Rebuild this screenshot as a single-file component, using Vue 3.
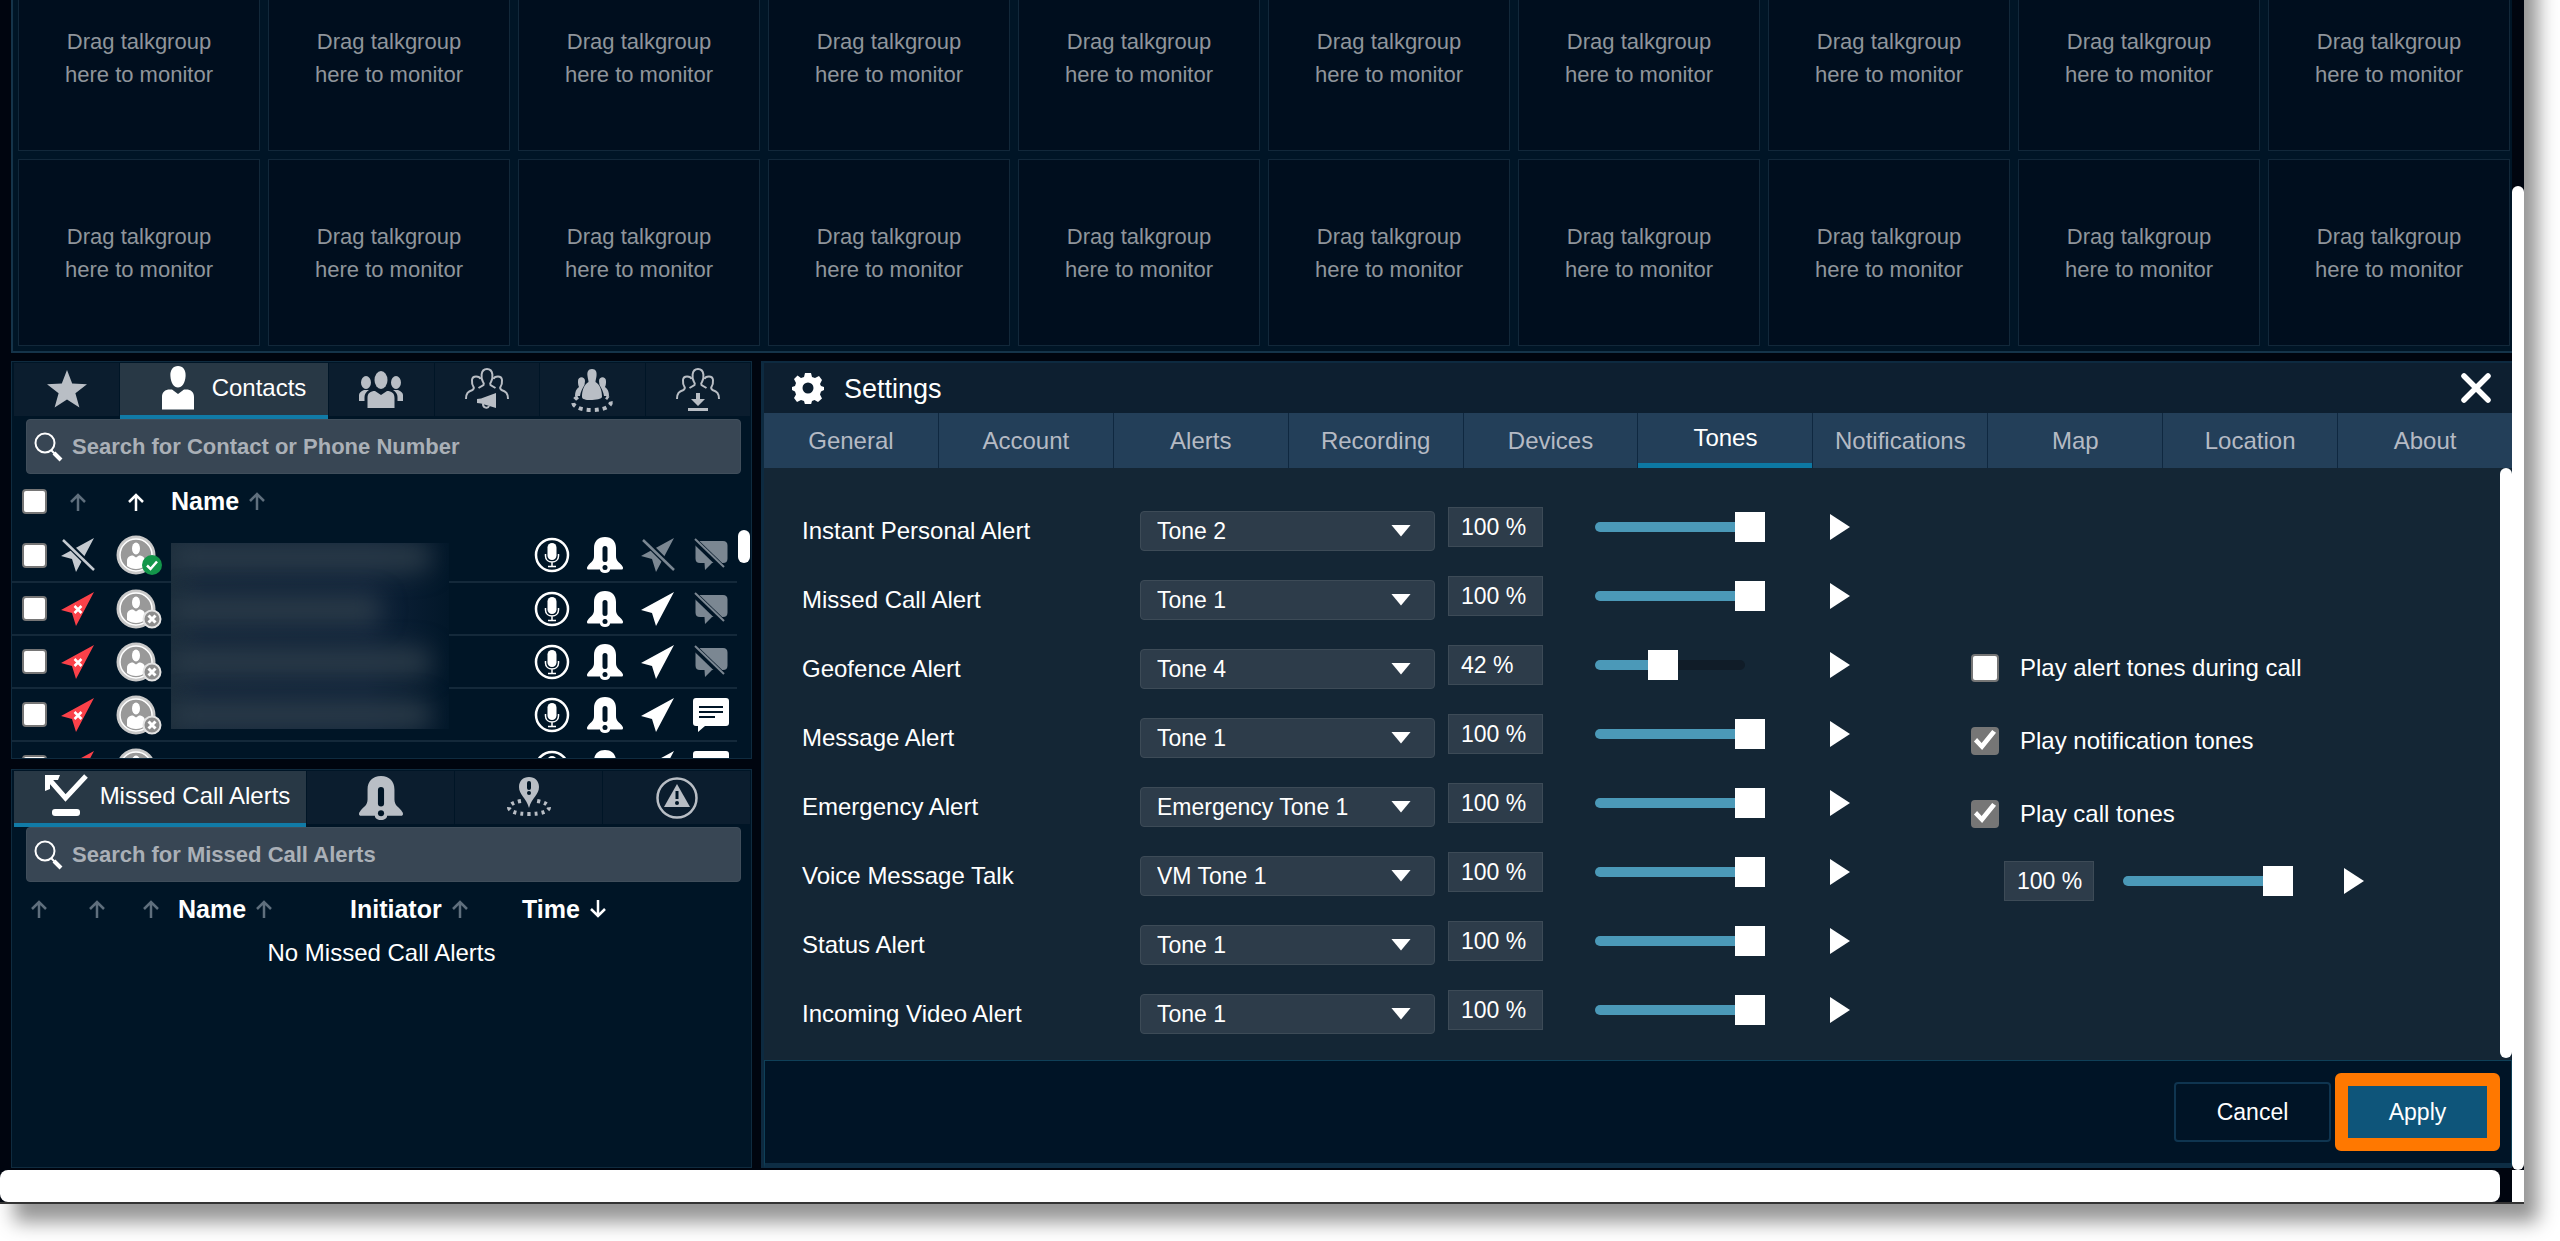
<script setup>
import { reactive } from 'vue'

const monitorSlots = 20

const contactTabs = [
  { id: 'favorites', icon: 'star', label: 'Favorites' },
  { id: 'contacts', icon: 'user', label: 'Contacts', active: true },
  { id: 'groups', icon: 'group', label: 'Groups' },
  { id: 'broadcast', icon: 'group-broadcast', label: 'Broadcast groups' },
  { id: 'area', icon: 'group-area', label: 'Area groups' },
  { id: 'inbound', icon: 'group-download', label: 'Inbound groups' },
]

const contacts = reactive([
  { id: 1, located: 'arrow-off', online: true, locate: false, chat: false, checked: false },
  { id: 2, located: 'arrow-x', online: false, locate: true, chat: false, checked: false },
  { id: 3, located: 'arrow-x', online: false, locate: true, chat: false, checked: false },
  { id: 4, located: 'arrow-x', online: false, locate: true, chat: true, checked: false },
  { id: 5, located: 'arrow-x', online: false, locate: true, chat: true, checked: false },
])

const alertTabs = [
  { id: 'missed', icon: 'missed', label: 'Missed Call Alerts', active: true },
  { id: 'ipa', icon: 'bell', label: 'Personal alerts' },
  { id: 'geo', icon: 'pin-area', label: 'Geofence alerts' },
  { id: 'emergency', icon: 'warning', label: 'Emergency alerts' },
]

const settingsTabs = [
  'General', 'Account', 'Alerts', 'Recording', 'Devices',
  'Tones', 'Notifications', 'Map', 'Location', 'About',
]

const tones = reactive([
  { name: 'Instant Personal Alert', tone: 'Tone 2', volume: 100 },
  { name: 'Missed Call Alert', tone: 'Tone 1', volume: 100 },
  { name: 'Geofence Alert', tone: 'Tone 4', volume: 42 },
  { name: 'Message Alert', tone: 'Tone 1', volume: 100 },
  { name: 'Emergency Alert', tone: 'Emergency Tone 1', volume: 100 },
  { name: 'Voice Message Talk', tone: 'VM Tone 1', volume: 100 },
  { name: 'Status Alert', tone: 'Tone 1', volume: 100 },
  { name: 'Incoming Video Alert', tone: 'Tone 1', volume: 100 },
])

const options = reactive([
  { label: 'Play alert tones during call', on: false },
  { label: 'Play notification tones', on: true },
  { label: 'Play call tones', on: true },
])

const callTones = reactive({ volume: 100 })
</script>

<template>
  <div class="page">
    <svg class="sprite" aria-hidden="true">
      <symbol id="star" viewBox="0 0 44 44">
        <path fill="currentColor" d="M22 2l5.2 13.6 14.8.6-11.6 9 4 14.2L22 31.4 9.600 39.400l4-14.200L2 16.200l14.800-.6z" />
      </symbol>
      <symbol id="user" viewBox="0 0 44 44">
        <path fill="currentColor" d="M22 0c5 0 8 4 7.600 10C29.200 17 26 21.500 22 21.500S14.800 17 14.400 10C14 4 17 0 22 0zM6 43.500V31c0-5 3-7.500 8-7.500h2l6 4.500 6-4.500h2c5 0 8 2.500 8 7.500v12.500z" />
      </symbol>
      <symbol id="group" viewBox="0 0 44 44">
        <g fill="currentColor">
          <ellipse cx="22" cy="12" rx="6.500" ry="9" />
          <path d="M8.500 40V30c0-5 3-7 7.500-7l6 4 6-4c4.500 0 7.500 2 7.500 7v10z" />
          <ellipse cx="7" cy="14.500" rx="5" ry="6.500" />
          <path d="M10 22H5c-3 1-5 3-5 5v6h5.500v-4c0-3 1.500-5 4.500-7z" />
          <ellipse cx="37" cy="14.500" rx="5" ry="6.500" />
          <path d="M34 22h5c3 1 5 3 5 5v6h-5.500v-4c0-3-1.500-5-4.500-7z" />
        </g>
      </symbol>
      <symbol id="group-outline" viewBox="0 0 44 44">
        <g fill="none" stroke="currentColor" stroke-width="2">
          <path d="M18 14c-2-3-3-13 4-13s6 10 4 13c-1 1-1 2-.5 3l5 3M18 14c1 1 1 2 .5 3l-5 3" />
          <path d="M15.500 11c-1-3-8-4-8.500 1-.2 3 0 5 1.500 7 1 1 0 2-1 3C3 23.500 1 25 1 31" />
          <path d="M28.500 11c1-3 8-4 8.500 1 .2 3 0 5-1.500 7-1 1 0 2 1 3C41 23.500 43 25 43 31" />
        </g>
      </symbol>
      <symbol id="group-broadcast" viewBox="0 0 44 44">
        <use href="#group-outline" />
        <path fill="currentColor" d="M12 31l4-.5 15-5.500v15l-15-4.500-4-.5z" />
        <path fill="none" stroke="currentColor" stroke-width="2" d="M18 36c0 4 5 5 6 2" />
      </symbol>
      <symbol id="group-area" viewBox="0 0 44 44">
        <g fill="currentColor">
          <path d="M22 1c4 0 5 3 4.500 7-.4 3-1 4-1 6 5 3 6.500 9 6.500 15 0 3-20 5-20 0 0-6 1.500-12 6.500-15 0-2-.6-3-1-6C17 4 18 1 22 1z" />
          <path d="M8 13c0-5 7-5 7 0l-.5 4c-2 3-4 7-4.500 11H5c0-4 1-7 4-9-1-2-1-4-1-6zM36 13c0-5-7-5-7 0l.5 4c2 3 4 7 4.500 11h5c0-4-1-7-4-9 1-2 1-4 1-6z" />
        </g>
        <path fill="none" stroke="currentColor" stroke-width="4" stroke-dasharray="4 4" d="M8 29C-2 34 4 42 22 42s24-8 14-13" />
      </symbol>
      <symbol id="group-download" viewBox="0 0 44 44">
        <use href="#group-outline" />
        <path fill="currentColor" d="M20 25h4v6h5l-7 7-7-7h5zM12 40h20v3H12z" />
      </symbol>
      <symbol id="search" viewBox="0 0 30 30">
        <circle cx="11" cy="11" r="9.500" fill="none" stroke="currentColor" stroke-width="2" />
        <path stroke="currentColor" stroke-width="2" d="M17 18l4 4" />
        <path stroke="currentColor" stroke-width="4" d="M20 21l7 7" />
      </symbol>
      <symbol id="up" viewBox="0 0 18 18">
        <path fill="none" stroke="currentColor" stroke-width="2.500" d="M9 18V2M2 9l7-7 7 7" />
      </symbol>
      <symbol id="down" viewBox="0 0 18 18">
        <path fill="none" stroke="currentColor" stroke-width="2.500" d="M9 0v16M2 9l7 7 7-7" />
      </symbol>
      <symbol id="mic" viewBox="0 0 36 36">
        <circle cx="18" cy="18" r="16" fill="none" stroke="currentColor" stroke-width="2.500" />
        <rect x="13.500" y="6" width="9" height="17" rx="4.500" fill="currentColor" />
        <path fill="none" stroke="currentColor" stroke-width="1.500" d="M11.500 17v2c0 8 13 8 13 0v-2M18 25v4M14 29.500h8" />
      </symbol>
      <symbol id="bell" viewBox="0 0 36 36">
        <path fill="currentColor" d="M18 0C11 0 7 4.500 7 11v8c0 5-3 6-5.500 9C.5 29.500 0 30 0 31s.6 1.500 1.500 1.500H13c0 2 2 3.500 5 3.500s5-1.500 5-3.500h11.500c.9 0 1.500-.5 1.500-1.500s-.5-1.500-1.500-3C32 25 29 24 29 19v-8C29 4.500 25 0 18 0z" />
        <rect class="cut" x="15.500" y="9" width="5" height="16" rx="2.500" />
        <circle class="cut" cx="18" cy="30.500" r="2.500" />
      </symbol>
      <symbol id="arrow" viewBox="0 0 36 36">
        <path fill="currentColor" d="M34 1L1 19l11 3 4 13z" />
      </symbol>
      <symbol id="arrow-off" viewBox="0 0 36 36">
        <use href="#arrow" />
        <path class="cut-line" d="M3 2l31 31" />
        <path stroke="currentColor" stroke-width="2.500" d="M3 3l31 30" />
      </symbol>
      <symbol id="arrow-x" viewBox="0 0 36 36">
        <use href="#arrow" />
        <path stroke="#fff" stroke-width="2.500" d="M14.500 15l7 7M21.500 15l-7 7" />
      </symbol>
      <symbol id="chat" viewBox="0 0 36 36">
        <path fill="currentColor" d="M3 1h30c2 0 3 1 3 3v22c0 2-1 3-3 3H12l-7 6v-6H3c-2 0-3-1-3-3V4c0-2 1-3 3-3z" />
        <path class="cut-stroke" d="M6 10h24M6 15h24M6 20h16" />
      </symbol>
      <symbol id="chat-off" viewBox="0 0 36 36">
        <path fill="currentColor" d="M6 4h24c3 0 4.500 1.500 4.500 4.500v13c0 3-1.500 4.500-4.500 4.500H19l-7 7-.5-7H7c-3 0-4.500-1.500-4.500-4.500v-14C2.500 5.500 3 4 6 4z" />
        <path class="cut-line" d="M2 4l28 27" />
        <path stroke="currentColor" stroke-width="2" d="M2 2l29 28" />
      </symbol>
      <symbol id="avatar" viewBox="0 0 40 40">
        <circle cx="20" cy="20" r="19.500" fill="#c9c9c9" />
        <circle cx="20" cy="20" r="16" fill="#999" stroke="#fff" stroke-width="1.500" />
        <ellipse cx="20" cy="13.500" rx="4" ry="6" fill="#fff" />
        <path fill="#fff" d="M11 31v-5c0-4 3-5.500 6-5.500l3 2 3-2c3 0 6 1.500 6 5.500v5c-5 4-13 4-18 0z" />
      </symbol>
      <symbol id="badge-ok" viewBox="0 0 20 20">
        <circle cx="10" cy="10" r="10" fill="#13964a" />
        <path fill="none" stroke="#fff" stroke-width="2.500" d="M5 10.500l3.500 3.500L15 6.500" />
      </symbol>
      <symbol id="badge-x" viewBox="0 0 20 20">
        <circle cx="10" cy="10" r="8.500" fill="#8d8d8d" stroke="#e4e4e4" stroke-width="2" />
        <path stroke="#fff" stroke-width="3" d="M6.500 6.500l7 7M13.500 6.500l-7 7" />
      </symbol>
      <symbol id="missed" viewBox="0 0 44 44">
        <path fill="none" stroke="currentColor" stroke-width="5" d="M4 4l17.500 20L42 2" />
        <path fill="currentColor" d="M1 1h15l-2 5H6v9l-5 2z" />
        <rect x="8" y="35" width="28" height="7" rx="3" fill="currentColor" />
      </symbol>
      <symbol id="pin-area" viewBox="0 0 44 44">
        <path fill="currentColor" d="M22 1c6 0 10 4 10 10 0 8-7 10-10 21-3-11-10-13-10-21C12 5 16 1 22 1z" />
        <rect class="cut" x="20" y="5" width="4" height="9" rx="2" />
        <circle class="cut" cx="22" cy="17" r="2" />
        <path fill="none" stroke="currentColor" stroke-width="4" stroke-dasharray="3 4" d="M14 25C-4 28-2 38 22 38s26-10 8-13" />
      </symbol>
      <symbol id="warning" viewBox="0 0 44 44">
        <circle cx="22" cy="22" r="19.500" fill="none" stroke="currentColor" stroke-width="2.500" />
        <path fill="currentColor" d="M22 8l13 23H9z" />
        <rect class="cut" x="20.500" y="15" width="3" height="8" />
        <circle class="cut" cx="22" cy="27" r="2" />
      </symbol>
      <symbol id="gear" viewBox="0 0 32 32">
        <path fill="currentColor" fill-rule="evenodd" d="M13 1h6l1 4 3 1 4-2 3 4-2 4 1 2 3 1v3l-3 1.500-1 3 2 4-4 3.500-3.500-2-2.500 1-1 3.500h-6l-1-3.500-3-1-4 2-3-4 2-3.500-1-3-3-1.500v-3l3-1 1-3-2-4 3.500-3.500L9 6l3-1zM16 10.500a5.500 5.500 0 100 11 5.500 5.500 0 000-11z" />
      </symbol>
      <symbol id="close" viewBox="0 0 32 32">
        <path fill="none" stroke="currentColor" stroke-width="5.500" stroke-linecap="round" d="M4 4l24 24M28 4L4 28" />
      </symbol>
      <symbol id="play" viewBox="0 0 20 26">
        <path fill="currentColor" d="M0 0l20 13L0 26z" />
      </symbol>
    </svg>

    <div class="app">
      <main class="workspace">
        <section class="monitors" aria-label="Talkgroup monitors">
          <div v-for="n in monitorSlots" :key="n" class="slot">Drag talkgroup<br />here to monitor</div>
        </section>

        <div class="lower">
          <div class="side">
            <section class="panel contacts">
              <nav class="tabs contact-tabs">
                <button
                  v-for="t in contactTabs"
                  :key="t.id"
                  type="button"
                  class="tab"
                  :class="{ active: t.active }"
                  :aria-label="t.label"
                >
                  <svg class="tab-icon"><use :href="'#' + t.icon" /></svg>
                  <span v-if="t.active">{{ t.label }}</span>
                </button>
              </nav>
              <div class="search">
                <svg class="search-icon"><use href="#search" /></svg>
                <input type="text" aria-label="Search contacts" placeholder="Search for Contact or Phone Number" />
              </div>
              <table class="contact-table">
                <colgroup>
                  <col class="c-check" /><col class="c-loc" /><col class="c-avatar" /><col />
                  <col class="c-act" /><col class="c-act" /><col class="c-act" /><col class="c-act" />
                </colgroup>
                <thead>
                  <tr>
                    <th><input type="checkbox" aria-label="Select all" /></th>
                    <th><svg class="sort"><use href="#up" /></svg></th>
                    <th><svg class="sort on"><use href="#up" /></svg></th>
                    <th class="name">Name <svg class="sort"><use href="#up" /></svg></th>
                    <th colspan="4"></th>
                  </tr>
                </thead>
                <tbody>
                  <tr v-for="c in contacts" :key="c.id">
                    <td><input v-model="c.checked" type="checkbox" :aria-label="'Select contact ' + c.id" /></td>
                    <td>
                      <svg class="act" :class="c.located === 'arrow-x' ? 'red' : 'pale'"><use :href="'#' + c.located" /></svg>
                    </td>
                    <td>
                      <span class="avatar">
                        <svg class="face"><use href="#avatar" /></svg>
                        <svg class="badge"><use :href="c.online ? '#badge-ok' : '#badge-x'" /></svg>
                      </span>
                    </td>
                    <td></td>
                    <td><svg class="act"><use href="#mic" /></svg></td>
                    <td><svg class="act"><use href="#bell" /></svg></td>
                    <td><svg class="act" :class="{ dim: !c.locate }"><use :href="c.locate ? '#arrow' : '#arrow-off'" /></svg></td>
                    <td><svg class="act" :class="{ dim: !c.chat }"><use :href="c.chat ? '#chat' : '#chat-off'" /></svg></td>
                  </tr>
                </tbody>
              </table>
              <div class="redacted"><i></i><i></i><i></i><i></i></div>
              <div class="list-thumb"></div>
            </section>

            <section class="panel missed">
              <nav class="tabs alert-tabs">
                <button
                  v-for="t in alertTabs"
                  :key="t.id"
                  type="button"
                  class="tab"
                  :class="{ active: t.active }"
                  :aria-label="t.label"
                >
                  <svg class="tab-icon"><use :href="'#' + t.icon" /></svg>
                  <span v-if="t.active">{{ t.label }}</span>
                </button>
              </nav>
              <div class="search">
                <svg class="search-icon"><use href="#search" /></svg>
                <input type="text" aria-label="Search missed calls" placeholder="Search for Missed Call Alerts" />
              </div>
              <table class="missed-table">
                <colgroup>
                  <col class="m-1" /><col class="m-2" /><col class="m-3" /><col class="m-text" /><col class="m-text" /><col />
                </colgroup>
                <thead>
                  <tr>
                    <th><svg class="sort"><use href="#up" /></svg></th>
                    <th><svg class="sort"><use href="#up" /></svg></th>
                    <th><svg class="sort"><use href="#up" /></svg></th>
                    <th class="name">Name <svg class="sort"><use href="#up" /></svg></th>
                    <th class="name">Initiator <svg class="sort"><use href="#up" /></svg></th>
                    <th class="name">Time <svg class="sort on"><use href="#down" /></svg></th>
                  </tr>
                </thead>
                <tbody>
                  <tr><td colspan="6">No Missed Call Alerts</td></tr>
                </tbody>
              </table>
            </section>
          </div>

          <section class="settings">
            <header class="settings-head">
              <svg class="head-icon"><use href="#gear" /></svg>
              <h1>Settings</h1>
              <button type="button" class="close" aria-label="Close"><svg class="head-icon"><use href="#close" /></svg></button>
            </header>
            <nav class="settings-tabs">
              <button v-for="t in settingsTabs" :key="t" type="button" :class="{ active: t === 'Tones' }">{{ t }}</button>
            </nav>
            <div class="settings-body">
              <div class="tones">
                <div v-for="(t, i) in tones" :key="t.name" class="tone">
                  <label class="tone-name" :for="'tone-' + i">{{ t.name }}</label>
                  <span class="select">
                    <select :id="'tone-' + i" v-model="t.tone"><option>{{ t.tone }}</option></select>
                    <span class="caret"></span>
                  </span>
                  <div class="level">
                    <output class="pct">{{ t.volume }} %</output>
                    <span class="slider">
                      <span class="track"><span class="fill" :style="{ width: t.volume + '%' }"></span></span>
                      <input v-model.number="t.volume" type="range" min="0" max="100" :aria-label="t.name + ' volume'" />
                    </span>
                    <button type="button" class="play" :aria-label="'Play ' + t.name"><svg><use href="#play" /></svg></button>
                  </div>
                </div>
              </div>
              <div class="options">
                <label v-for="o in options" :key="o.label" class="option">
                  <input v-model="o.on" type="checkbox" />{{ o.label }}
                </label>
                <div class="level call-level">
                  <output class="pct">{{ callTones.volume }} %</output>
                  <span class="slider">
                    <span class="track"><span class="fill" :style="{ width: callTones.volume + '%' }"></span></span>
                    <input v-model.number="callTones.volume" type="range" min="0" max="100" aria-label="Call tones volume" />
                  </span>
                  <button type="button" class="play" aria-label="Play call tone"><svg><use href="#play" /></svg></button>
                </div>
              </div>
              <div class="body-scroll"></div>
            </div>
            <footer class="settings-foot">
              <button type="button" class="cancel">Cancel</button>
              <button type="button" class="apply">Apply</button>
            </footer>
          </section>
        </div>
      </main>
      <div class="v-scroll"></div>
      <div class="h-scroll"></div>
      <div class="corner"></div>
    </div>
  </div>
</template>

<style>
body {
  background: #fff;
}
</style>

<style scoped>
* {
  box-sizing: border-box;
}
.page {
  min-height: 100vh;
  overflow: hidden;
  background: #fff;
  color: #fff;
  font-family: "Liberation Sans", Arial, sans-serif;
  font-size: 24px;
}
.sprite {
  position: absolute;
  width: 0;
  height: 0;
}
.cut {
  fill: #001526;
}
.cut-line {
  stroke: #001526;
  stroke-width: 6;
}
.cut-stroke {
  fill: none;
  stroke: #001526;
  stroke-width: 2;
}
button,
input,
select {
  margin: 0;
  padding: 0;
  border: 0;
  background: none;
  color: inherit;
  font: inherit;
}
svg {
  display: block;
}

/* the window is scrolled: its top edge lies above the viewport */
.app {
  display: grid;
  grid-template-columns: minmax(0, 1fr) 12px;
  margin: -40px 36px 0 0;
  background: #00050f;
  border-bottom: 2px solid #333;
  box-shadow: 14px 18px 18px rgba(0, 0, 0, 0.42);
}
.workspace {
  padding: 0 0 2px 11px;
}
.monitors {
  display: grid;
  grid-template-columns: repeat(10, minmax(0, 1fr));
  gap: 8px;
  padding: 4px 2px 5px 5px;
  background: #001526;
  border: solid #15344a;
  border-width: 0 0 2px 2px;
}
.slot {
  display: flex;
  align-items: center;
  justify-content: center;
  height: 187px;
  border: 1px solid #12283a;
  background: #000e1e;
  color: #8f959b;
  font-size: 22px;
  line-height: 33px;
  text-align: center;
}
.lower {
  display: grid;
  grid-template-columns: 741px minmax(0, 1fr);
  gap: 9px;
  margin-top: 8px;
}
.side {
  display: flex;
  flex-direction: column;
  gap: 10px;
}
.panel {
  position: relative;
  overflow: hidden;
  background: #001526;
  border: 1px solid #0f2b3f;
}
.contacts {
  height: 398px;
}
.missed {
  flex: 1;
}
.tabs {
  display: grid;
  gap: 1px;
  height: 57px;
  padding: 1px 1px 0 2px;
}
.contact-tabs {
  grid-template-columns: 105px 208px repeat(4, minmax(0, 1fr));
}
.alert-tabs {
  grid-template-columns: 292px repeat(3, minmax(0, 1fr));
}
.tab {
  display: flex;
  align-items: center;
  justify-content: center;
  height: 53px;
  background: #0b1d2e;
  color: #b9bec5;
}
.tab.active {
  height: 56px;
  padding: 0 0 2px 14px;
  background: #283845;
  border-bottom: 4px solid #117ba7;
  color: #fff;
}
.tab-icon {
  flex: none;
  width: 44px;
  height: 44px;
}
.tab.active .tab-icon {
  margin-right: 12px;
}
.search {
  display: flex;
  align-items: center;
  height: 55px;
  margin: 0 10px 0 14px;
  padding-left: 7px;
  background: #384654;
  border: 1px solid #404e5b;
  border-radius: 4px;
}
.search-icon {
  width: 30px;
  height: 30px;
  margin-right: 8px;
}
.search input {
  flex: 1;
  height: 50px;
  font-size: 22px;
  font-weight: bold;
  outline: 0;
}
.search input::placeholder {
  color: #aab0b7;
  opacity: 1;
}
table {
  border-collapse: collapse;
  table-layout: fixed;
}
th,
td {
  padding: 0;
  vertical-align: middle;
}
td svg.act,
th > svg.sort,
td > input,
th > input {
  margin-left: auto;
  margin-right: auto;
}
.contact-table {
  width: 725px;
}
.c-check {
  width: 44px;
}
.c-loc {
  width: 44px;
}
.c-avatar {
  width: 71px;
}
.c-act {
  width: 53px;
}
.contact-table thead tr {
  height: 55px;
}
.contact-table tbody tr {
  height: 53px;
  border-bottom: 2px solid #14293a;
}
.name {
  font-size: 25px;
  text-align: left;
  white-space: nowrap;
}
.missed-table .name {
  padding-left: 4px;
}
.sort {
  width: 18px;
  height: 18px;
  color: #5f6f7d;
}
.name .sort {
  display: inline-block;
  margin: 0 0 0 2px;
}
.sort.on {
  color: #fff;
}
.act {
  width: 36px;
  height: 36px;
}
.red {
  color: #fb4149;
}
.pale {
  color: #c5cad0;
}
.dim {
  color: #7b8792;
}
.avatar {
  position: relative;
  display: block;
  width: 40px;
  height: 40px;
  margin: 0 auto;
}
.face {
  width: 40px;
  height: 40px;
}
.badge {
  position: absolute;
  right: -6px;
  bottom: 0;
  width: 20px;
  height: 20px;
}
.redacted {
  position: absolute;
  top: 181px;
  left: 159px;
  display: flex;
  flex-direction: column;
  justify-content: space-between;
  width: 278px;
  height: 186px;
  overflow: hidden;
  background: linear-gradient(90deg, #1b2d3b, #13253a 12%, #10233a 70%, #021729);
}
.redacted i {
  width: 260px;
  height: 28px;
  border-radius: 12px;
  background: #2b3b48;
  filter: blur(12px);
}
.redacted i:nth-child(2) {
  width: 210px;
}
.list-thumb {
  position: absolute;
  top: 168px;
  right: 1px;
  width: 12px;
  height: 33px;
  border-radius: 6px;
  background: #fff;
}
input[type="checkbox"] {
  display: block;
  flex: none;
  width: 25px;
  height: 25px;
  appearance: none;
  background: #fff;
  border: 2px solid #767676;
  border-radius: 4px;
}
input[type="checkbox"]:checked {
  background: #767676;
}
input[type="checkbox"]:checked::after {
  content: "";
  display: block;
  height: 100%;
  background: #fff;
  clip-path: polygon(4% 54%, 17% 40%, 36% 60%, 80% 6%, 96% 18%, 38% 90%);
}
.missed-table {
  width: 100%;
}
.m-1 {
  width: 54px;
}
.m-2 {
  width: 62px;
}
.m-3 {
  width: 46px;
}
.m-text {
  width: 172px;
}
.missed-table thead tr {
  height: 54px;
}
.missed-table tbody td {
  height: 34px;
  text-align: center;
}

.settings {
  display: flex;
  flex-direction: column;
  border: solid #0d2a40;
  border-width: 2px 0 0 3px;
  background: #142635;
}
.settings-head {
  display: flex;
  align-items: center;
  height: 50px;
  padding: 0 20px 0 28px;
  background: #0d1f30;
}
.head-icon {
  width: 32px;
  height: 32px;
}
h1 {
  flex: 1;
  margin: 2px 0 0 20px;
  font-size: 27px;
  font-weight: normal;
}
.settings-tabs {
  display: grid;
  grid-template-columns: repeat(10, minmax(0, 1fr));
  gap: 1px;
  height: 55px;
  background: #0f2840;
}
.settings-tabs button {
  background: #233f59;
  color: #b5bac4;
}
.settings-tabs .active {
  border-bottom: 5px solid #0d78a3;
  color: #fff;
}
.settings-body {
  display: flex;
  height: 592px;
}
.tones {
  flex: none;
  padding: 28px 0 0 38px;
}
.tone {
  display: flex;
  align-items: center;
  height: 69px;
}
.tone-name {
  width: 338px;
}
.select {
  display: grid;
  align-items: center;
  width: 295px;
  margin-right: 13px;
}
.select select,
.caret,
.track,
.slider input {
  grid-area: 1 / 1;
}
.select select {
  height: 40px;
  padding-left: 16px;
  appearance: none;
  background: #2d3c4a;
  border: 1px solid #3d4b57;
  border-radius: 4px;
  font-size: 23px;
}
.caret {
  justify-self: end;
  width: 20px;
  height: 12px;
  margin-right: 24px;
  background: #fff;
  clip-path: polygon(0 0, 100% 0, 50% 100%);
  pointer-events: none;
}
.level {
  display: flex;
  align-items: center;
}
.tone .level {
  margin-bottom: 7px;
}
.pct {
  width: 95px;
  height: 40px;
  padding-left: 12px;
  background: #2d3c4a;
  border: 1px solid #3d4b57;
  font-size: 23px;
  line-height: 38px;
}
.slider {
  display: grid;
  align-items: center;
  width: 180px;
  margin: 0 65px 0 42px;
}
.track {
  height: 10px;
  margin: 0 20px 0 10px;
  overflow: hidden;
  border-radius: 5px;
  background: #101c28;
}
.fill {
  display: block;
  height: 100%;
  background: #4b99b8;
}
.slider input {
  width: 100%;
  height: 30px;
  appearance: none;
}
.slider input::-webkit-slider-thumb {
  width: 30px;
  height: 30px;
  appearance: none;
  background: #fff;
}
.play svg {
  width: 20px;
  height: 26px;
}
.options {
  flex: 1;
  padding: 163px 0 0 121px;
}
.option {
  display: flex;
  align-items: center;
  gap: 21px;
  height: 73px;
}
.option input[type="checkbox"] {
  width: 28px;
  height: 28px;
}
.call-level {
  height: 62px;
  padding-left: 33px;
}
.call-level .pct {
  width: 90px;
}
.call-level .slider {
  margin: 0 51px 0 19px;
}
.body-scroll {
  flex: none;
  width: 12px;
  height: 590px;
  border-radius: 6px;
  background: #fff;
}
.settings-foot {
  display: flex;
  align-items: center;
  justify-content: flex-end;
  gap: 4px;
  height: 108px;
  padding-right: 11px;
  background: #001426;
  border: 1px solid #0f4058;
  border-bottom: 5px solid #0d2d44;
  font-size: 23px;
}
.cancel {
  width: 157px;
  height: 60px;
  border: 2px solid #0f3550;
  border-radius: 4px;
}
.apply {
  width: 165px;
  height: 78px;
  border: 13px solid #ff7800;
  border-radius: 6px;
  background: #0e557a;
}
.v-scroll {
  margin-top: 226px;
  border-radius: 6px;
  background: #fff;
}
.h-scroll {
  height: 32px;
  margin-right: 12px;
  border-radius: 8px;
  background: #fff;
}
.corner {
  background: #fff;
}
</style>
